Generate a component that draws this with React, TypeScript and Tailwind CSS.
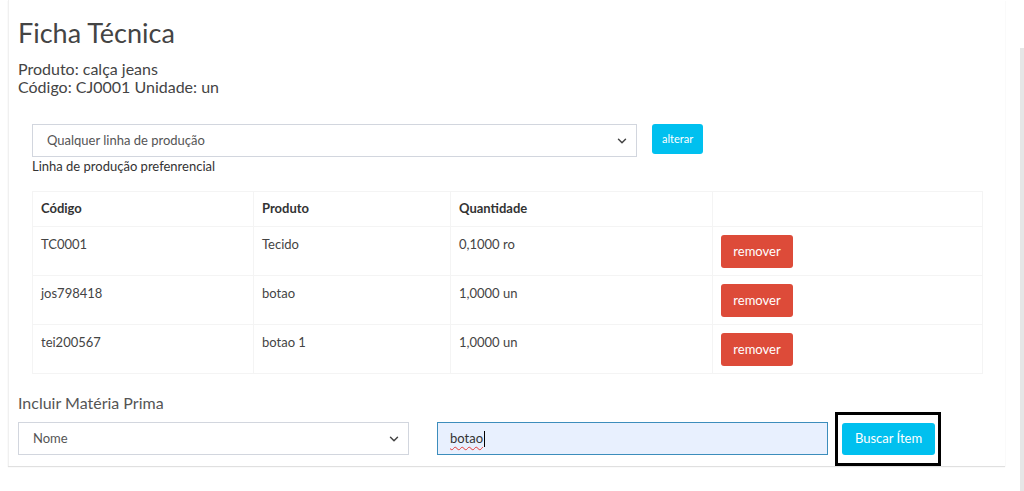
import { ChevronDown } from 'lucide-react';

const rows = [
  { codigo: 'TC0001', produto: 'Tecido', qtd: '0,1000 ro' },
  { codigo: 'jos798418', produto: 'botao', qtd: '1,0000 un' },
  { codigo: 'tei200567', produto: 'botao 1', qtd: '1,0000 un' },
];

function SelectBox({ label, className }: { label: string; className: string }) {
  return (
    <div className={`relative ${className}`}>
      <select className="h-full w-full appearance-none border border-[#d2d6de] bg-white pl-[14px] text-[13px] text-[#555] outline-none">
        <option>{label}</option>
      </select>
      <ChevronDown
        className="pointer-events-none absolute right-[8px] top-1/2 h-[14px] w-[14px] -translate-y-1/2 text-[#444]"
        strokeWidth={2.5}
      />
    </div>
  );
}

export default function App() {
  return (
    <div
      className="relative h-[491px] w-[1024px] overflow-hidden bg-white text-[#333]"
      style={{ fontFamily: 'Lato, "Noto Sans", sans-serif' }}
    >
      {/* scrollbar thumb */}
      <div className="absolute right-0 top-[48px] h-[443px] w-[4px] bg-[#e6e6e6]" />

      <div className="ml-[8px] w-[997px] border-l border-[#f0f0f0] bg-white pb-[11px] pl-[9px] shadow-[0_1px_1px_rgba(0,0,0,0.12)]">
        <h1 className="pt-[17px] text-[27px] leading-[31px] text-[#444]">Ficha Técnica</h1>
        <div className="mt-[12px] text-[16px] leading-[18px] text-[#444]">
          <p>Produto: calça jeans</p>
          <p>Código: CJ0001 Unidade: un</p>
        </div>

        <div className="ml-[14px] mt-[28px] w-[950px]">
          <div className="flex items-start gap-[15px]">
            <SelectBox label="Qualquer linha de produção" className="h-[33px] w-[605px]" />
            <button className="h-[30px] rounded-[3px] bg-[#00c0ef] px-[10px] text-[11px] text-white">
              alterar
            </button>
          </div>
          <p className="mt-[1px] text-[13px] leading-[16px] text-[#333]">Linha de produção prefenrencial</p>

          <table className="mt-[17px] w-[950px] table-fixed border-collapse border border-[#f4f4f4] text-[13px]">
            <colgroup>
              <col className="w-[221px]" />
              <col className="w-[197px]" />
              <col className="w-[262px]" />
              <col className="w-[270px]" />
            </colgroup>
            <thead>
              <tr className="h-[35px]">
                <th className="border border-[#f4f4f4] px-[8px] text-left font-bold text-[#333]">Código</th>
                <th className="border border-[#f4f4f4] px-[8px] text-left font-bold text-[#333]">Produto</th>
                <th className="border border-[#f4f4f4] px-[8px] text-left font-bold text-[#333]">Quantidade</th>
                <th className="border border-[#f4f4f4] px-[8px]" />
              </tr>
            </thead>
            <tbody>
              {rows.map((r) => (
                <tr key={r.codigo}>
                  <td className="border border-[#f4f4f4] px-[8px] pt-[8px] align-top text-[#444]">{r.codigo}</td>
                  <td className="border border-[#f4f4f4] px-[8px] pt-[8px] align-top text-[#444]">{r.produto}</td>
                  <td className="border border-[#f4f4f4] px-[8px] pt-[8px] align-top text-[#444]">{r.qtd}</td>
                  <td className="border border-[#f4f4f4] px-[8px] pb-[7px] pt-[8px] align-top">
                    <button className="h-[33px] w-[72px] rounded-[3px] bg-[#dd4b39] text-[13px] text-white">
                      remover
                    </button>
                  </td>
                </tr>
              ))}
            </tbody>
          </table>
        </div>

        <h3 className="mt-[19px] text-[16px] leading-[20px] text-[#555]">Incluir Matéria Prima</h3>
        <div className="mt-[9px] flex items-center">
          <SelectBox label="Nome" className="h-[33px] w-[391px]" />
          <div className="ml-[28px] flex h-[33px] w-[391px] items-center border border-[#3c8dbc] bg-[#e8f0fe] pl-[12px] text-[13px] text-[#333]">
            <span className="underline decoration-[#e53935] decoration-wavy decoration-1 underline-offset-[3px]">botao</span>
            <span className="ml-[1px] h-[16px] w-[1px] bg-black" />
          </div>
          <div className="relative ml-[14px]">
            <button className="h-[32px] w-[93px] rounded-[3px] bg-[#00c0ef] text-[13px] text-white">
              Buscar Ítem
            </button>
            {/* highlight frame */}
            <div className="pointer-events-none absolute -bottom-[11px] -left-[7px] -right-[6px] -top-[11px] border-[3px] border-black" />
          </div>
        </div>
      </div>
    </div>
  );
}
